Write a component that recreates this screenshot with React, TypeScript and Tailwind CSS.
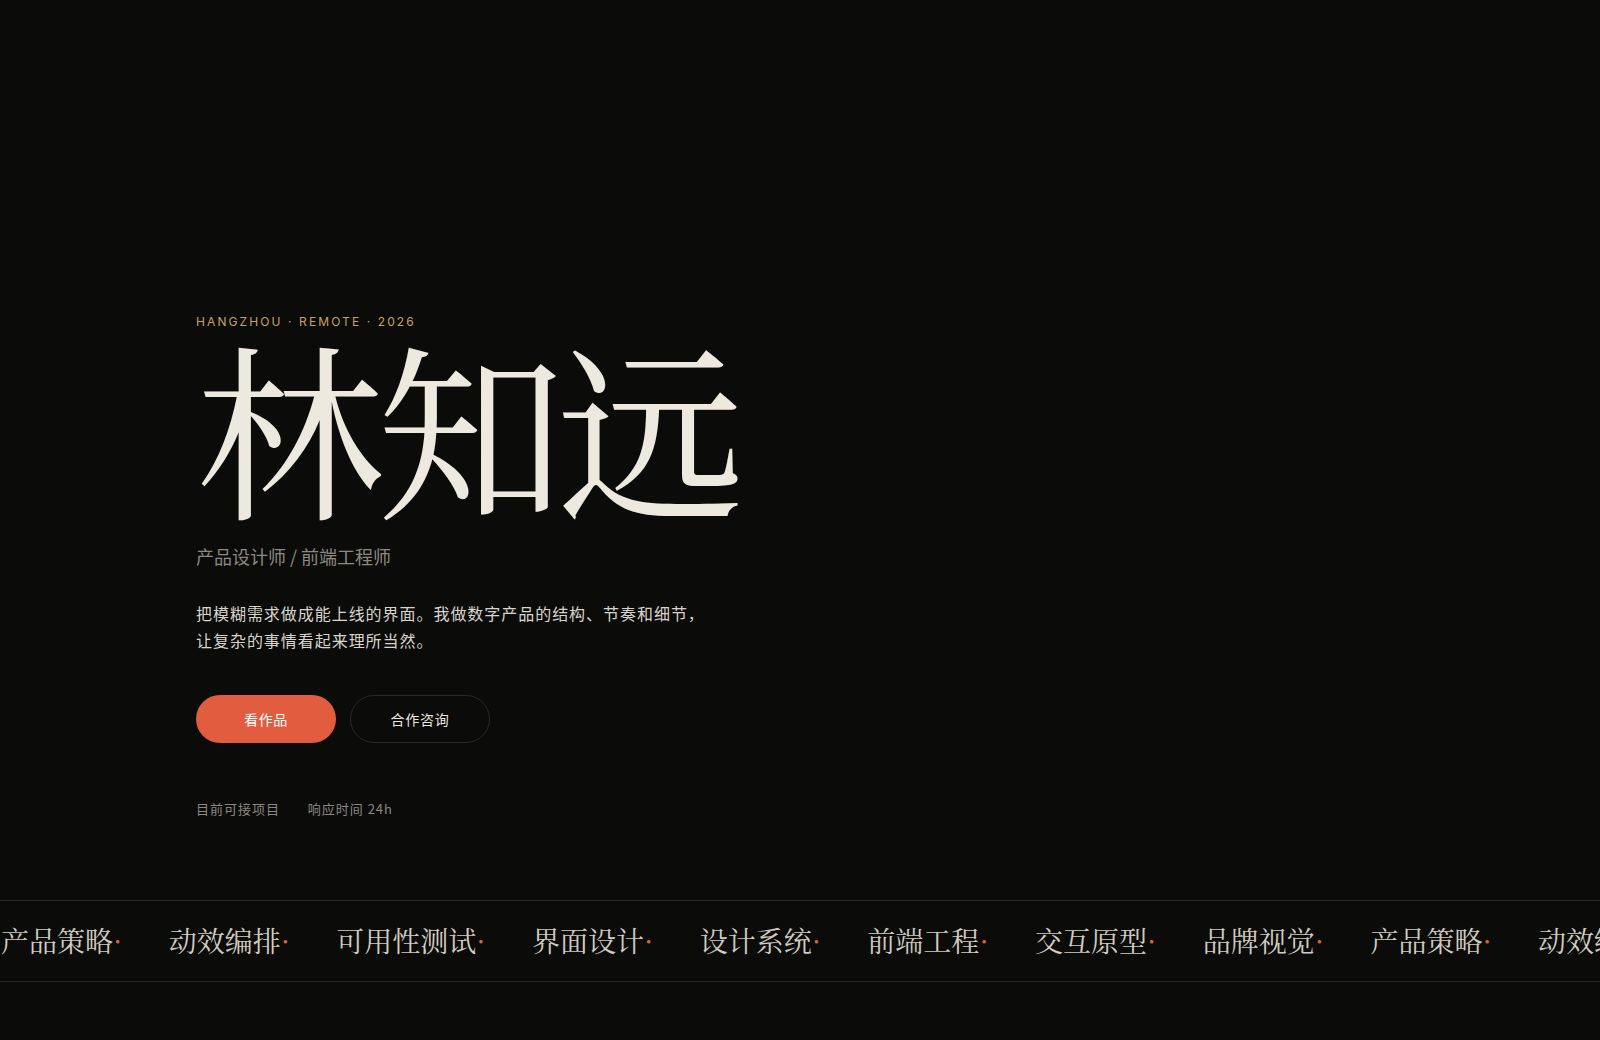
import React from 'react';

const SKILLS = ['产品策略', '动效编排', '可用性测试', '界面设计', '设计系统', '前端工程', '交互原型', '品牌视觉', '产品策略', '动效编排', '可用性测试'];

const SANS = "font-['Inter','Noto_Sans_CJK_SC',sans-serif]";

export default function App() {
  return (
    <div className="min-h-screen w-full bg-[#0b0b0a] overflow-hidden">
      {/* Hero */}
      <section className={`pl-[196px] pt-[314px] ${SANS}`}>
        <div className="text-xs leading-4 tracking-[0.175em] text-[#c8a35f] uppercase">
          HANGZHOU · REMOTE · 2026
        </div>

        <h1 className="text-[188px] leading-none tracking-[-0.04em] font-normal text-[#ede9df] font-['Noto_Serif_CJK_SC','Source_Han_Serif_SC',serif]">
          林知远
        </h1>

        <p className="mt-6 text-lg leading-7 text-[#8d8981] font-['Noto_Sans_CJK_SC',sans-serif]">
          产品设计师 / 前端工程师
        </p>

        <p className="mt-[30px] text-base leading-[27px] tracking-[0.06em] text-[#d9d5cc] font-['Noto_Sans_CJK_SC',sans-serif]">
          把模糊需求做成能上线的界面。我做数字产品的结构、节奏和细节，
          <br />
          让复杂的事情看起来理所当然。
        </p>

        <div className="mt-[41px] flex gap-[14px]">
          <button className="w-[140px] h-12 rounded-full bg-[#e25c3f] text-sm tracking-wider text-white font-['Noto_Sans_CJK_SC',sans-serif]">
            看作品
          </button>
          <button className="w-[140px] h-12 rounded-full border border-[#2a2a28] text-sm tracking-wider text-[#ece8df] font-['Noto_Sans_CJK_SC',sans-serif]">
            合作咨询
          </button>
        </div>

        <div className="mt-14 flex gap-7 text-[13px] tracking-[0.075em] text-[#8d8981] font-['Noto_Sans_CJK_SC',sans-serif]">
          <span>目前可接项目</span>
          <span>响应时间 24h</span>
        </div>
      </section>

      {/* Skills marquee */}
      <div className="mt-[81px] h-[82px] pb-[2px] border-y border-[#262624] flex items-center overflow-hidden">
        <div className="ml-[1px] flex items-center gap-[46.5px] whitespace-nowrap font-['Noto_Serif_CJK_SC','Source_Han_Serif_SC',serif] text-[28px] leading-none text-[#d2ccc0]">
          {SKILLS.map((s, i) => (
            <span key={i} className="flex items-center">
              {s}
              <span className="text-[#e25c3f]">·</span>
            </span>
          ))}
        </div>
      </div>
    </div>
  );
}
